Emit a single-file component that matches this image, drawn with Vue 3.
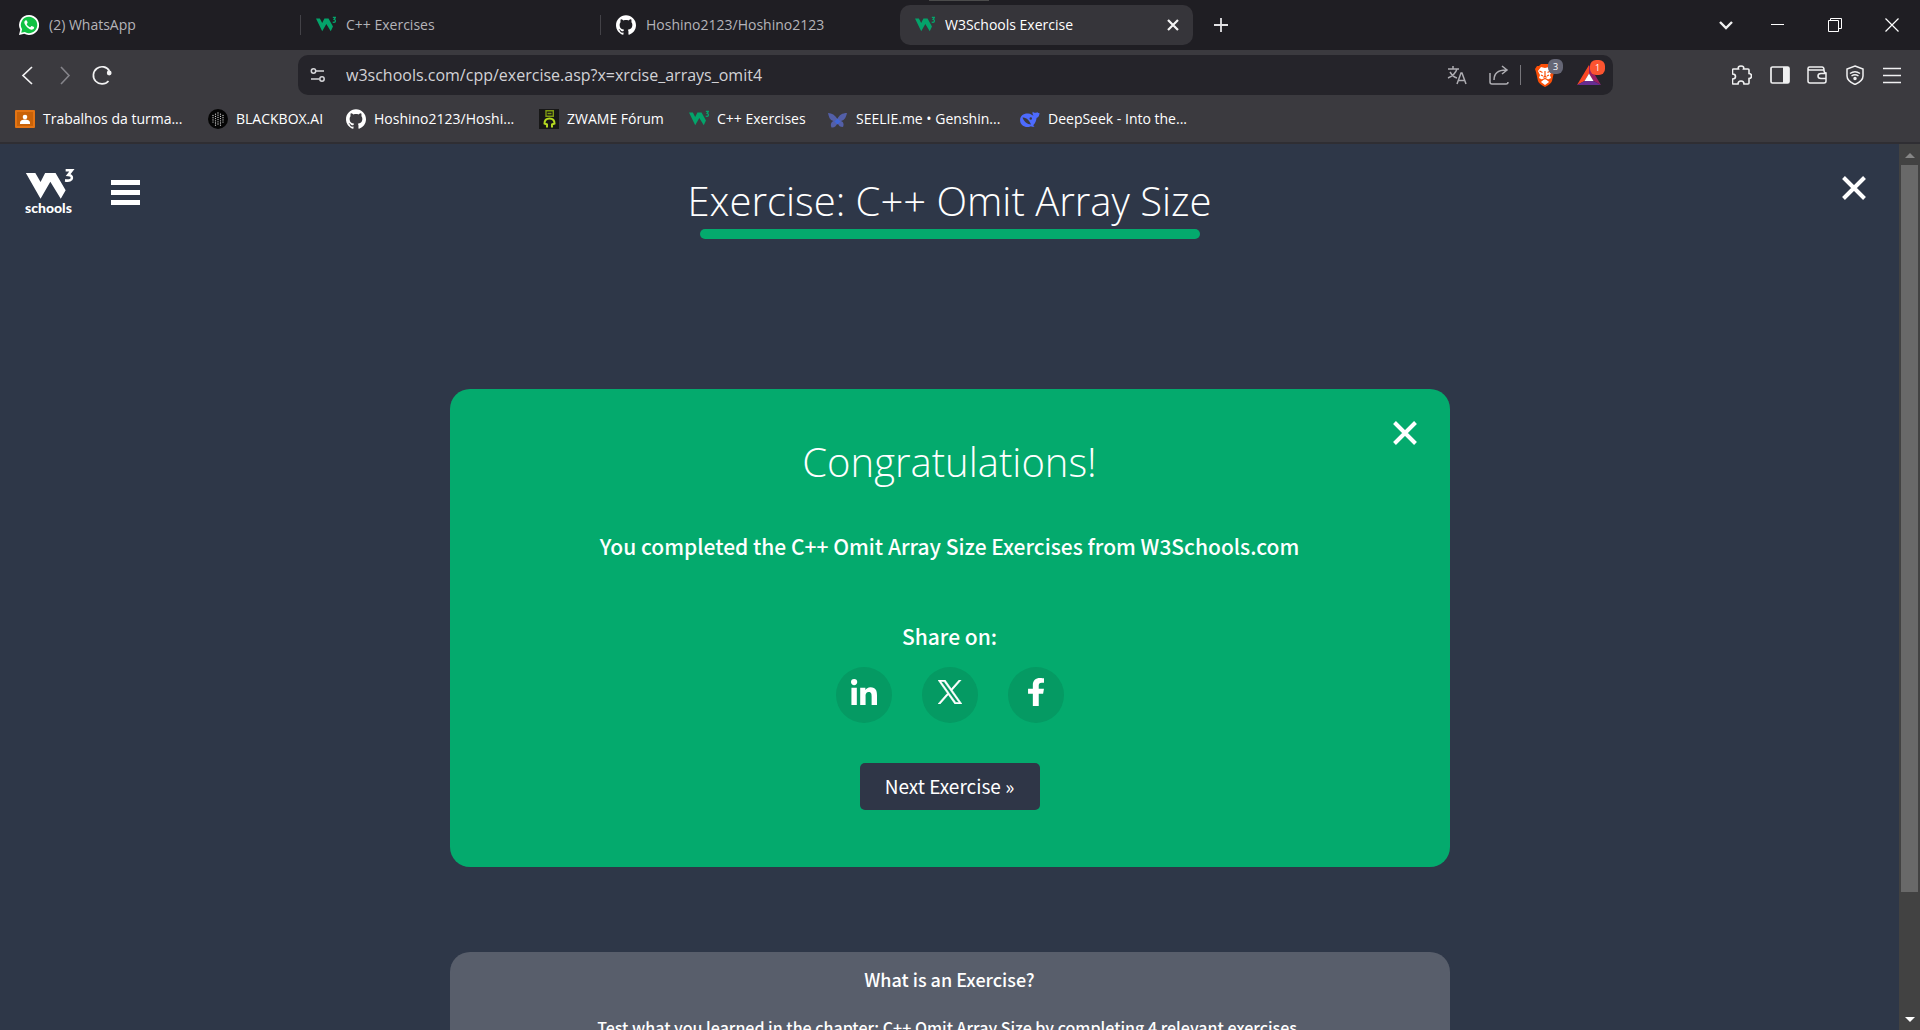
<script setup>
import { ref } from 'vue'

const url = ref('w3schools.com/cpp/exercise.asp?x=xrcise_arrays_omit4')

const tabs = [
  { icon: 'whatsapp', title: '(2) WhatsApp' },
  { icon: 'w3', title: 'C++ Exercises' },
  { icon: 'github', title: 'Hoshino2123/Hoshino2123' },
  { icon: 'w3', title: 'W3Schools Exercise', active: true },
]

const bookmarks = [
  { icon: 'classroom', title: 'Trabalhos da turma...' },
  { icon: 'blackbox', title: 'BLACKBOX.AI' },
  { icon: 'github', title: 'Hoshino2123/Hoshi...' },
  { icon: 'zwame', title: 'ZWAME Fórum' },
  { icon: 'w3', title: 'C++ Exercises' },
  { icon: 'seelie', title: 'SEELIE.me • Genshin...' },
  { icon: 'deepseek', title: 'DeepSeek - Into the...' },
]
</script>

<template>
  <div class="browser">
    <!-- Shared favicons -->
    <svg class="sprite" aria-hidden="true">
      <symbol id="whatsapp" viewBox="0 0 24 24">
        <path fill="#fff" d="M12 0a12 12 0 0 0-10.500 17.800L0 24l6.300-1.500A12 12 0 1 0 12 0z" />
        <path fill="#10c143" d="M12 2.200a9.800 9.800 0 0 0-8.300 15l-1 4.100 4.200-1A9.800 9.800 0 1 0 12 2.200z" />
        <path fill="#fff" d="M8.200 6.300c-.7 0-2 1.200-1.800 3 .3 2 2 4.300 4 6 2.100 1.700 4 2.500 5.600 2.200 1.500-.3 2.200-1.500 2.200-2.500 0-.5-2.800-1.900-3.200-1.700-.6.300-1 1.400-1.500 1.400-.9 0-4.100-2.600-4.200-3.700 0-.5 1-1.200 1-1.700 0-.6-1-2.700-1.300-2.900-.2-.1-.5-.1-.8-.1z" />
      </symbol>
      <symbol id="github" viewBox="0 0 24 24">
        <path fill="#fff" d="M12 .297c-6.630 0-12 5.373-12 12 0 5.303 3.438 9.800 8.205 11.385.6.113.82-.258.82-.577 0-.285-.01-1.040-.015-2.040-3.338.724-4.042-1.610-4.042-1.610C4.422 18.070 3.633 17.700 3.633 17.700c-1.087-.744.084-.729.084-.729 1.205.084 1.838 1.236 1.838 1.236 1.070 1.835 2.809 1.305 3.495.998.108-.776.417-1.305.76-1.605-2.665-.3-5.466-1.332-5.466-5.930 0-1.310.465-2.380 1.235-3.220-.135-.303-.54-1.523.105-3.176 0 0 1.005-.322 3.300 1.230.96-.267 1.980-.399 3-.405 1.020.006 2.040.138 3 .405 2.280-1.552 3.285-1.230 3.285-1.230.645 1.653.24 2.873.12 3.176.765.84 1.230 1.910 1.230 3.220 0 4.610-2.805 5.625-5.475 5.920.42.360.81 1.096.81 2.220 0 1.606-.015 2.896-.015 3.286 0 .315.21.690.825.570C20.565 22.092 24 17.592 24 12.297c0-6.627-5.373-12-12-12" />
      </symbol>
      <symbol id="w3" viewBox="75 482 145 145">
        <path fill="#04a36a" d="M75 508h28l17 32 16-32h30l32 58-16 34-32-52-30 52z" />
        <path fill="none" stroke="#04a36a" stroke-width="9" d="M197 500h19l-10 14q11 2 10 12-3 12-20 8" />
      </symbol>
      <symbol id="classroom" viewBox="0 0 20 20">
        <rect y="1" width="20" height="18" rx="1" fill="#e37414" />
        <rect x="2" y="3" width="16" height="14" fill="#c96208" />
        <circle cx="10" cy="8" r="2.300" fill="#fff" />
        <path fill="#fff" d="M5 15v-1.500c0-2 2.500-3 5-3s5 1 5 3V15z" />
      </symbol>
      <symbol id="blackbox" viewBox="0 0 20 20">
        <circle cx="10" cy="10" r="10" fill="#050505" />
        <path fill="none" stroke="#cfcfcf" stroke-width="1.300" stroke-linecap="round" stroke-dasharray="0 2.200" d="M10 4v13M7.500 5.200v11M12.500 5.200v11M5 6.500v8M15 6.500v8" />
      </symbol>
      <symbol id="zwame" viewBox="0 0 20 20">
        <rect width="20" height="20" fill="#171717" />
        <path fill="none" stroke="#7f9a12" stroke-width="1.400" d="M7 1.700h7.300v5.600H7zM8.500 4.500h4" />
        <path fill="none" stroke="#b4d820" stroke-width="2" d="M8 18.500v-3l-2.500-1q0-5 5-5t5 5l-2.500 1v3" />
      </symbol>
      <symbol id="seelie" viewBox="0 0 20 20">
        <path fill="#535fa8" d="M0 4c4 0 7 2 9.500 6 1.500-4 5-6 9.500-6-1 4-2 7-6 8 3 1 3 4 2 6-3 0-4-1-5.500-4-1 3-3 5-6 4.500-1-2.500-1-5 2-6.500-4-1-4.500-4-5.500-8z" />
        <path fill="#3f66d8" d="M6.500 12.500l3-3 3 3-3 3z" />
      </symbol>
      <symbol id="deepseek" viewBox="0 0 20 20">
        <path fill="#4d6bfe" d="M19.500 4c-1.200 0-2-.2-2.400-1-.7 1-1.600.8-2.800.8-.8 0-1.200-.6-1.300-1.200-1 1.500-.4 3 .6 4-1.500 0-3-1.900-5.600-2C3.500 4.400 0 7 .1 11.500.3 15.500 3.500 18 7.500 18c1.800 0 2.500-.5 3.500-.8 1 .6 2.500.6 3.500.3l-1.300-1.300c2-1.800 3-4.300 3.400-7.200 1.900-.8 2.900-2.400 2.900-5z" />
        <path fill="#3b3a3f" d="M2.500 8.500c4-.5 7 3.500 8.500 7-4 0-7-3-8.500-7z" />
        <circle cx="10.800" cy="9.500" r="1.200" fill="#3b3a3f" />
      </symbol>
    </svg>

    <header class="chrome">
      <div class="tabstrip">
        <nav class="tabs" aria-label="Tabs">
          <div v-for="(tab, i) in tabs" :key="i" class="tab" :class="{ active: tab.active }">
            <svg class="favicon"><use :href="'#' + tab.icon" /></svg>
            <span class="tab-title">{{ tab.title }}</span>
            <button v-if="tab.active" class="tab-close" aria-label="Close tab">
              <svg width="12" height="12" viewBox="0 0 12 12"><path d="M1 1l10 10M11 1L1 11" stroke="#f4f4f4" stroke-width="2.200" /></svg>
            </button>
          </div>
        </nav>
        <button class="new-tab" aria-label="New tab">
          <svg width="14" height="14" viewBox="0 0 14 14"><path d="M7 0v14M0 7h14" stroke="#e2e2e4" stroke-width="1.800" /></svg>
        </button>
        <div class="window-controls">
          <button aria-label="Search tabs"><svg width="14" height="14" viewBox="0 0 14 14"><path d="M1 4l6 6 6-6" fill="none" stroke="#f0f0f0" stroke-width="2.400" /></svg></button>
          <button aria-label="Minimise"><svg width="14" height="14" viewBox="0 0 14 14"><path d="M0 6.500h13" stroke="#fff" /></svg></button>
          <button aria-label="Restore"><svg width="14" height="14" viewBox="0 0 14 14"><path d="M.5 2.500h10v11H.5zM2.500 2.500v-2h11v10h-3" fill="none" stroke="#fff" /></svg></button>
          <button aria-label="Close"><svg width="14" height="14" viewBox="0 0 14 14"><path d="M.5.5l13 13M13.500.5l-13 13" stroke="#fff" stroke-width="1.200" /></svg></button>
        </div>
        <span class="drag-mark"></span>
      </div>

      <div class="toolbar">
        <div class="nav-buttons">
          <button aria-label="Back"><svg width="20" height="20" viewBox="0 0 20 20"><path d="M14 2L5 10.500 14 19" fill="none" stroke="#f2f2f3" stroke-width="1.700" /></svg></button>
          <button aria-label="Forward"><svg width="20" height="20" viewBox="0 0 20 20"><path d="M6 2l8 8.500L6 19" fill="none" stroke="#85848a" stroke-width="1.600" /></svg></button>
          <button aria-label="Reload"><svg width="20" height="20" viewBox="0 0 20 20"><path d="M17.400 6A8.600 8.600 0 1 0 16.500 16" fill="none" stroke="#f2f2f3" stroke-width="1.700" /><circle cx="17.200" cy="8" r="2.400" fill="#f2f2f3" /></svg></button>
        </div>

        <form class="omnibox" @submit.prevent>
          <button type="button" aria-label="Site information">
            <svg width="16" height="16" viewBox="0 0 16 16" fill="none" stroke="#d6d6d9" stroke-width="1.500"><circle cx="3.500" cy="4" r="2.200" /><path d="M6 4h8M1 12h8" /><circle cx="12" cy="12" r="2.200" /></svg>
          </button>
          <input v-model="url" type="text" aria-label="Address" spellcheck="false" />
          <div class="omni-actions">
            <button type="button" aria-label="Translate">
              <svg width="20" height="20" viewBox="0 0 20 20" fill="none" stroke="#aeadb2" stroke-width="1.500"><path d="M6 1v3M1 4h11M3 7q3 5 7 6M10 4q-2 6-9 9M10 19l4-11h1l4 11M11.500 15.500h6" /></svg>
            </button>
            <button type="button" aria-label="Share">
              <svg width="20" height="20" viewBox="0 0 20 20" fill="none" stroke="#aeadb2" stroke-width="1.500"><path d="M1 8v9q0 2 2 2h14q2 0 2-2M5 15q0-10 12-10M13 1l5 4-5 4" /></svg>
            </button>
            <span class="divider"></span>
            <button type="button" class="badged" aria-label="Brave Shields">
              <svg width="20" height="24" viewBox="0 0 20 24"><path fill="#fb4f07" d="M6 1h8l2 2h2l2 3-1 3-2 9q-1 3-7 6-6-3-7-6L1 9 0 6l2-3h2z" /><path fill="#fff" d="M6 4l4 1 4-1 3 4-2 4 1 3-4 2 2 2-4 3-4-3 2-2-4-2 1-3-2-4z" /><path fill="none" stroke="#fb4f07" stroke-width="1.200" d="M4.500 8l3 1.500M15.500 8l-3 1.500M10 8v5l-1.500 1.500M10 13l1.500 1.500M7 17l3-1.500 3 1.500M6 12l2 1M14 12l-2 1" /></svg>
              <span class="badge">3</span>
            </button>
            <button type="button" class="badged" aria-label="Brave Rewards">
              <svg width="24" height="22" viewBox="0 0 24 22"><path fill="#fb4724" d="M12 1v8.500L7.500 17 0 21z" /><path fill="#9b1f63" d="M12 1l12 20-7.500-4L12 9.500z" /><path fill="#662d91" d="M0 21l7.500-4h9l7.500 4z" /><path fill="#fff" d="M12 9.500l4.500 7.500h-9z" /></svg>
              <span class="badge hot">1</span>
            </button>
          </div>
        </form>

        <div class="extensions">
          <button aria-label="Extensions"><svg width="20" height="20" viewBox="0 0 20 20" fill="none" stroke="#f0f0f1" stroke-width="1.600"><path d="M1.500 4h5q-1-3 2.500-3t2.500 3H16q1 0 1 1v3.500q2.500 0 2.500 2.500T17 13.500V18q0 1-1 1h-4q0-3-3-3t-3 3H1.500q-1 0-1-1v-4q3 0 3-2.500t-3-2.500V5q0-1 1-1z" /></svg></button>
          <button aria-label="Side panel"><svg width="20" height="20" viewBox="0 0 20 20"><rect x="1" y="2" width="18" height="16" rx="1.500" fill="none" stroke="#f0f0f1" stroke-width="1.700" /><path fill="#f0f0f1" d="M13 2h6v16h-6z" /></svg></button>
          <button aria-label="Wallet"><svg width="20" height="20" viewBox="0 0 20 20" fill="none" stroke="#f0f0f1" stroke-width="1.500"><path d="M17 5H2.500Q1 5 1 3.500T2.500 2H15q2 0 2 3t2 3v8q0 2-2 2H3q-2 0-2-2V3M19 8.500h-5q-3 0-3 2.500t3 2.500h5" /></svg></button>
          <button aria-label="VPN"><svg width="20" height="20" viewBox="0 0 20 20" fill="none" stroke="#f0f0f1" stroke-width="1.500"><path d="M10 1l8 3v7q0 5-8 8.500Q2 16 2 11V4zM5 8.500q5-3.500 10 0M6.500 11q3.500-2.500 7 0" /><circle cx="10" cy="13.500" r="1" fill="#f0f0f1" /></svg></button>
          <button aria-label="Menu"><svg width="20" height="20" viewBox="0 0 20 20"><path d="M1 3.500h18M1 10.500h18M1 17.500h18" stroke="#f0f0f1" stroke-width="1.700" /></svg></button>
        </div>
      </div>

      <nav class="bookmarks" aria-label="Bookmarks">
        <a v-for="b in bookmarks" :key="b.title" href="#">
          <svg class="favicon"><use :href="'#' + b.icon" /></svg>
          <span>{{ b.title }}</span>
        </a>
      </nav>
    </header>

    <div class="viewport">
      <main class="page">
        <div class="page-head">
          <div class="head-left">
            <a class="logo" href="#" aria-label="W3Schools home">
              <svg width="50" height="30" viewBox="74 507 150 92">
                <path fill="#fff" d="M75 519h29l16 28 14-28h32l31 53-15 26-32-52-30 52z" />
                <path fill="none" stroke="#fff" stroke-width="8" d="M197 511h19l-11 14q12 1 11 10-1 10-21 7" />
              </svg>
              <span>schools</span>
            </a>
            <button class="burger" aria-label="Menu"><i></i><i></i><i></i></button>
          </div>
          <div class="title">
            <h1>Exercise: C++ Omit Array Size</h1>
            <div class="progress"></div>
          </div>
          <button class="close" aria-label="Close exercise">
            <svg width="24" height="24" viewBox="0 0 24 24"><path d="M1.500 1.500l21 21M22.500 1.500l-21 21" stroke="#fff" stroke-width="4" /></svg>
          </button>
        </div>

        <section class="card done">
          <button class="card-close" aria-label="Close">
            <svg width="24" height="24" viewBox="0 0 24 24"><path d="M1.500 1.500l21 21M22.500 1.500l-21 21" stroke="#fff" stroke-width="4" /></svg>
          </button>
          <h2>Congratulations!</h2>
          <p class="lead">You completed the C++ Omit Array Size Exercises from W3Schools.com</p>
          <p class="share-label">Share on:</p>
          <div class="share">
            <a href="#" aria-label="LinkedIn">
              <svg width="26" height="26" viewBox="0 0 448 448" fill="#fff"><path d="M100.300 448H7.400V148.900h92.900zM53.800 108.100C24.100 108.100 0 83.500 0 53.800a53.800 53.800 0 0 1 107.600 0c0 29.700-24.100 54.300-53.800 54.300zM447.900 448h-92.700V302.400c0-34.700-.7-79.200-48.300-79.200-48.300 0-55.700 37.700-55.700 76.700V448h-92.800V148.900h89.100v40.800h1.300c12.400-23.500 42.700-48.300 87.900-48.300 94 0 111.300 61.900 111.300 142.300V448z" /></svg>
            </a>
            <a href="#" aria-label="X">
              <svg width="24" height="24" viewBox="0 0 24 24" fill="#fff" stroke="#fff" stroke-width=".6"><path d="M14.258 10.152L23.176 0h-2.113l-7.747 8.813L7.133 0H0l9.352 13.328L0 23.973h2.113l8.176-9.309 6.531 9.309h7.133zm-2.895 3.293l-.949-1.328L2.875 1.560h3.246l6.086 8.523.945 1.328 7.910 11.078h-3.246z" /></svg>
            </a>
            <a href="#" aria-label="Facebook">
              <svg width="16" height="28" viewBox="22 0 272 512" preserveAspectRatio="none" fill="#fff"><path d="M279.100 288l14.200-92.700h-88.900v-60.100c0-25.300 12.400-50.100 52.200-50.100h40.400V6.300S260.400 0 225.400 0c-73.200 0-121.100 44.400-121.100 124.700v70.600H22.900V288h81.400v224h100.200V288z" /></svg>
            </a>
          </div>
          <button class="next">Next Exercise »</button>
        </section>

        <section class="card about">
          <h3>What is an Exercise?</h3>
          <p>Test what you learned in the chapter: C++ Omit Array Size by completing 4 relevant exercises.</p>
        </section>
      </main>

      <div class="scrollbar" aria-hidden="true">
        <svg width="10" height="5" viewBox="0 0 10 5"><path fill="#868686" d="M5 0l5 5H0z" /></svg>
        <div class="track"><div class="thumb"></div></div>
        <svg width="10" height="5" viewBox="0 0 10 5"><path fill="#fff" d="M0 0h10L5 5z" /></svg>
      </div>
    </div>
  </div>
</template>

<style>
body {
  margin: 0;
  background: #2e3748;
}
</style>

<style scoped>
.browser {
  display: flex;
  flex-direction: column;
  height: 100vh;
  overflow: hidden;
  color: #fff;
  font: 400 14px/20px "Open Sans", "Noto Sans", sans-serif;
}
.sprite {
  position: absolute;
  width: 0;
  height: 0;
}
button {
  display: flex;
  align-items: center;
  justify-content: center;
  padding: 0;
  border: 0;
  background: none;
  color: inherit;
  font: inherit;
  flex: none;
}
a {
  color: inherit;
  text-decoration: none;
}
h1, h2, h3, p {
  margin: 0;
}
.favicon {
  flex: none;
  width: 20px;
  height: 20px;
}

/* Tab strip */
.tabstrip {
  position: relative;
  display: flex;
  align-items: center;
  height: 50px;
  background: #1f1e23;
}
.drag-mark {
  position: absolute;
  top: 0;
  left: 929px;
  width: 60px;
  height: 1px;
  background: #4b4b4b;
}
.tabs {
  display: flex;
  flex: 0 1 1193px;
  min-width: 0;
}
.tab {
  position: relative;
  box-sizing: border-box;
  display: flex;
  align-items: center;
  gap: 10px;
  flex: 1 1 300px;
  min-width: 0;
  height: 40px;
  padding: 0 14px 0 19px;
  color: #b5b4b9;
}
.tab + .tab:not(.active) {
  padding-left: 16px;
}
.tab + .tab:not(.active)::before {
  content: "";
  position: absolute;
  left: 0;
  top: 10px;
  width: 1px;
  height: 20px;
  background: #434247;
}
.tab.active {
  flex-basis: 293px;
  padding-left: 15px;
  border-radius: 10px;
  background: #36353a;
  color: #fff;
}
.tab-title {
  flex: 1;
  overflow: hidden;
  white-space: nowrap;
}
.new-tab {
  width: 56px;
  height: 40px;
}
.window-controls {
  display: flex;
  margin-left: auto;
}
.window-controls button {
  width: 57px;
  height: 48px;
}
.window-controls button:first-child {
  width: 47px;
}

/* Toolbar */
.chrome {
  flex: none;
  background: #3b3a3f;
  border-bottom: 2px solid #2f2e33;
}
.toolbar {
  display: flex;
  align-items: center;
  height: 50px;
}
.nav-buttons {
  display: flex;
  gap: 17px;
  box-sizing: border-box;
  width: 298px;
  padding-left: 18px;
}
.omnibox {
  display: flex;
  align-items: center;
  flex: 1;
  min-width: 0;
  box-sizing: border-box;
  height: 40px;
  padding: 0 12px;
  border-radius: 10px;
  background: #25242a;
}
.omnibox input {
  flex: 1;
  min-width: 0;
  margin-left: 20px;
  padding: 0;
  border: 0;
  outline: 0;
  background: none;
  color: #d2d2d6;
  font: 400 16px/24px "Open Sans", "Noto Sans", sans-serif;
}
.omni-actions {
  display: flex;
  align-items: center;
  gap: 22px;
}
.divider {
  width: 1px;
  height: 20px;
  margin: 0 -8px 0 -11px;
  background: #77767b;
}
.badged {
  position: relative;
}
.badge {
  position: absolute;
  top: -4px;
  left: 13px;
  width: 15px;
  height: 15px;
  border-radius: 6px;
  background: #656675;
  color: #fff;
  font-size: 9px;
  line-height: 15px;
}
.badge.hot {
  background: #fb5430;
}
.extensions {
  display: flex;
  justify-content: space-between;
  box-sizing: border-box;
  width: 307px;
  padding: 0 18px 0 119px;
}

/* Bookmarks */
.bookmarks {
  display: grid;
  grid-template-columns: 193px 138px 193px 150px 139px 192px auto;
  align-items: center;
  height: 38px;
  padding: 0 15px 4px;
}
.bookmarks a {
  display: flex;
  align-items: center;
  gap: 8px;
  white-space: nowrap;
}

/* Page */
.viewport {
  display: flex;
  flex: 1;
  min-height: 0;
}
.page {
  flex: 1;
  min-width: 0;
  overflow: hidden;
  background: #2e3748;
  font: 500 21px/30px "Noto Sans CJK JP", sans-serif;
}
.page-head {
  display: grid;
  grid-template-columns: 1fr auto 1fr;
  align-items: start;
  padding: 25px 33px 0 25px;
}
.head-left {
  display: flex;
  gap: 36px;
}
.logo {
  display: flex;
  flex-direction: column;
  width: 50px;
  font: 900 14px/17px Lato, sans-serif;
}
.burger {
  flex-direction: column;
  gap: 5px;
  margin-top: 11px;
  height: 25px;
}
.burger i {
  width: 29px;
  height: 5px;
  background: #fff;
}
.title {
  display: flex;
  flex-direction: column;
  align-items: center;
  padding: 4px 0 0 8px;
}
h1, h2 {
  font-family: "Open Sans", "Noto Sans", sans-serif;
  font-weight: 300;
  font-size: 40px;
  line-height: 55px;
}
.progress {
  width: 500px;
  height: 10px;
  margin-top: 1px;
  border-radius: 5px;
  background: #04aa6d;
}
.close {
  justify-self: end;
  margin-top: 7px;
}
.card {
  position: relative;
  display: flex;
  flex-direction: column;
  align-items: center;
  box-sizing: border-box;
  width: 1000px;
  max-width: 90%;
  margin: 0 auto;
  border-radius: 20px;
  text-align: center;
}
.done {
  margin-top: 150px;
  padding: 45px 20px 57px;
  background: #04aa6d;
}
.card-close {
  position: absolute;
  top: 32px;
  right: 33px;
}
.lead {
  margin-top: 42px;
}
.share-label {
  margin-top: 60px;
}
.share {
  display: flex;
  gap: 30px;
  margin-top: 16px;
}
.share a {
  display: flex;
  align-items: center;
  justify-content: center;
  box-sizing: border-box;
  width: 56px;
  height: 56px;
  padding-bottom: 6px;
  border-radius: 50%;
  background: #059a63;
}
.next {
  width: 180px;
  height: 47px;
  margin-top: 40px;
  padding-bottom: 2px;
  border-radius: 5px;
  background: #2f3647;
  font-size: 19px;
  font-weight: 400;
}
.about {
  margin-top: 85px;
  padding: 15px 20px 40px;
  background: #585e6b;
  font-size: 16px;
  line-height: 24px;
}
.about h3 {
  font-size: 18px;
  font-weight: 500;
}
.about p {
  margin-top: 24px;
}

/* Scrollbar */
.scrollbar {
  display: flex;
  flex-direction: column;
  align-items: center;
  justify-content: space-between;
  gap: 7px;
  box-sizing: border-box;
  width: 21px;
  padding: 9px 0 8px;
  background: #424242;
}
.track {
  flex: 1;
  width: 17px;
}
.thumb {
  height: 86%;
  background: #696969;
}
</style>
